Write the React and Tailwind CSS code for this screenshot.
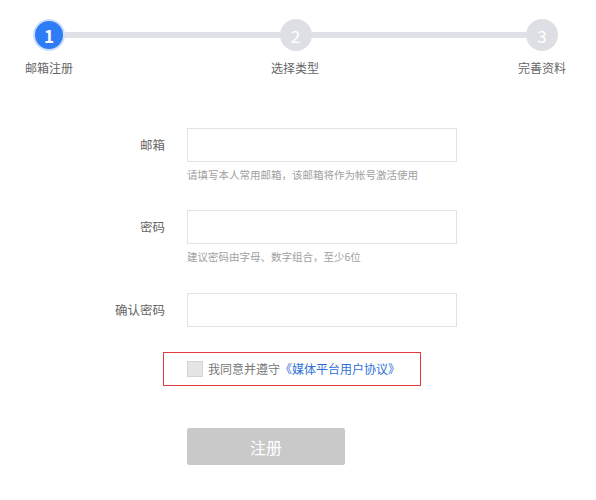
export default function App() {
  const font = { fontFamily: '"Noto Sans CJK SC", "Noto Sans", sans-serif' };
  return (
    <div className="w-[596px] h-[500px] bg-white text-[#666]" style={font}>
      {/* steps */}
      <div className="flex items-center pt-[19px] pl-[33px] pr-[38px]">
        <div className="w-[32px] h-[32px] rounded-full bg-[#2e7cf6] border-2 border-[#cddffb] flex items-center justify-center text-white text-[17px] font-bold leading-none">1</div>
        <div className="flex-1 h-[6px] bg-[#e0e1e6]" />
        <div className="w-[32px] h-[32px] rounded-full bg-[#dedfe4] flex items-center justify-center text-white text-[17px] leading-none">2</div>
        <div className="flex-1 h-[6px] bg-[#e0e1e6]" />
        <div className="w-[32px] h-[32px] rounded-full bg-[#dedfe4] flex items-center justify-center text-white text-[17px] leading-none">3</div>
      </div>
      <div className="flex mt-[9px] text-[12px] leading-[16px] text-[#666]">
        <div className="w-[80px] ml-[9px] text-center">邮箱注册</div>
        <div className="w-[80px] ml-[166px] text-center">选择类型</div>
        <div className="w-[80px] ml-[167px] text-center">完善资料</div>
      </div>

      {/* form */}
      <div className="mt-[52px]">
        <div className="flex items-center">
          <div className="w-[165px] text-right text-[12.5px]">邮箱</div>
          <div className="ml-[22px] w-[270px] h-[34px] border border-[#e2e2e2]" />
        </div>
        <div className="ml-[187px] mt-[6px] text-[10.5px] leading-[14px] text-[#a0a0a0]">请填写本人常用邮箱，该邮箱将作为帐号激活使用</div>

        <div className="flex items-center mt-[28px]">
          <div className="w-[165px] text-right text-[12.5px]">密码</div>
          <div className="ml-[22px] w-[270px] h-[34px] border border-[#e2e2e2]" />
        </div>
        <div className="ml-[187px] mt-[6px] text-[10.5px] leading-[14px] text-[#a0a0a0]">建议密码由字母、数字组合，至少6位</div>

        <div className="flex items-center mt-[29px]">
          <div className="w-[165px] text-right text-[12.5px]">确认密码</div>
          <div className="ml-[22px] w-[270px] h-[34px] border border-[#e2e2e2]" />
        </div>

        <div className="ml-[163px] mt-[25px] w-[258px] h-[34px] border border-[#e0393e] flex items-center">
          <div className="ml-[23px] w-[16px] h-[16px] bg-[#e5e5e5] border border-[#d4d4d4]" />
          <div className="ml-[5px] text-[12px] text-[#777]">
            我同意并遵守<span className="text-[#2d6fd7]">《媒体平台用户协议》</span>
          </div>
        </div>

        <div className="ml-[187px] mt-[42px] w-[158px] h-[37px] bg-[#c9c9c9] rounded-[2px] flex items-center justify-center text-white text-[16px]">注册</div>
      </div>
    </div>
  );
}
